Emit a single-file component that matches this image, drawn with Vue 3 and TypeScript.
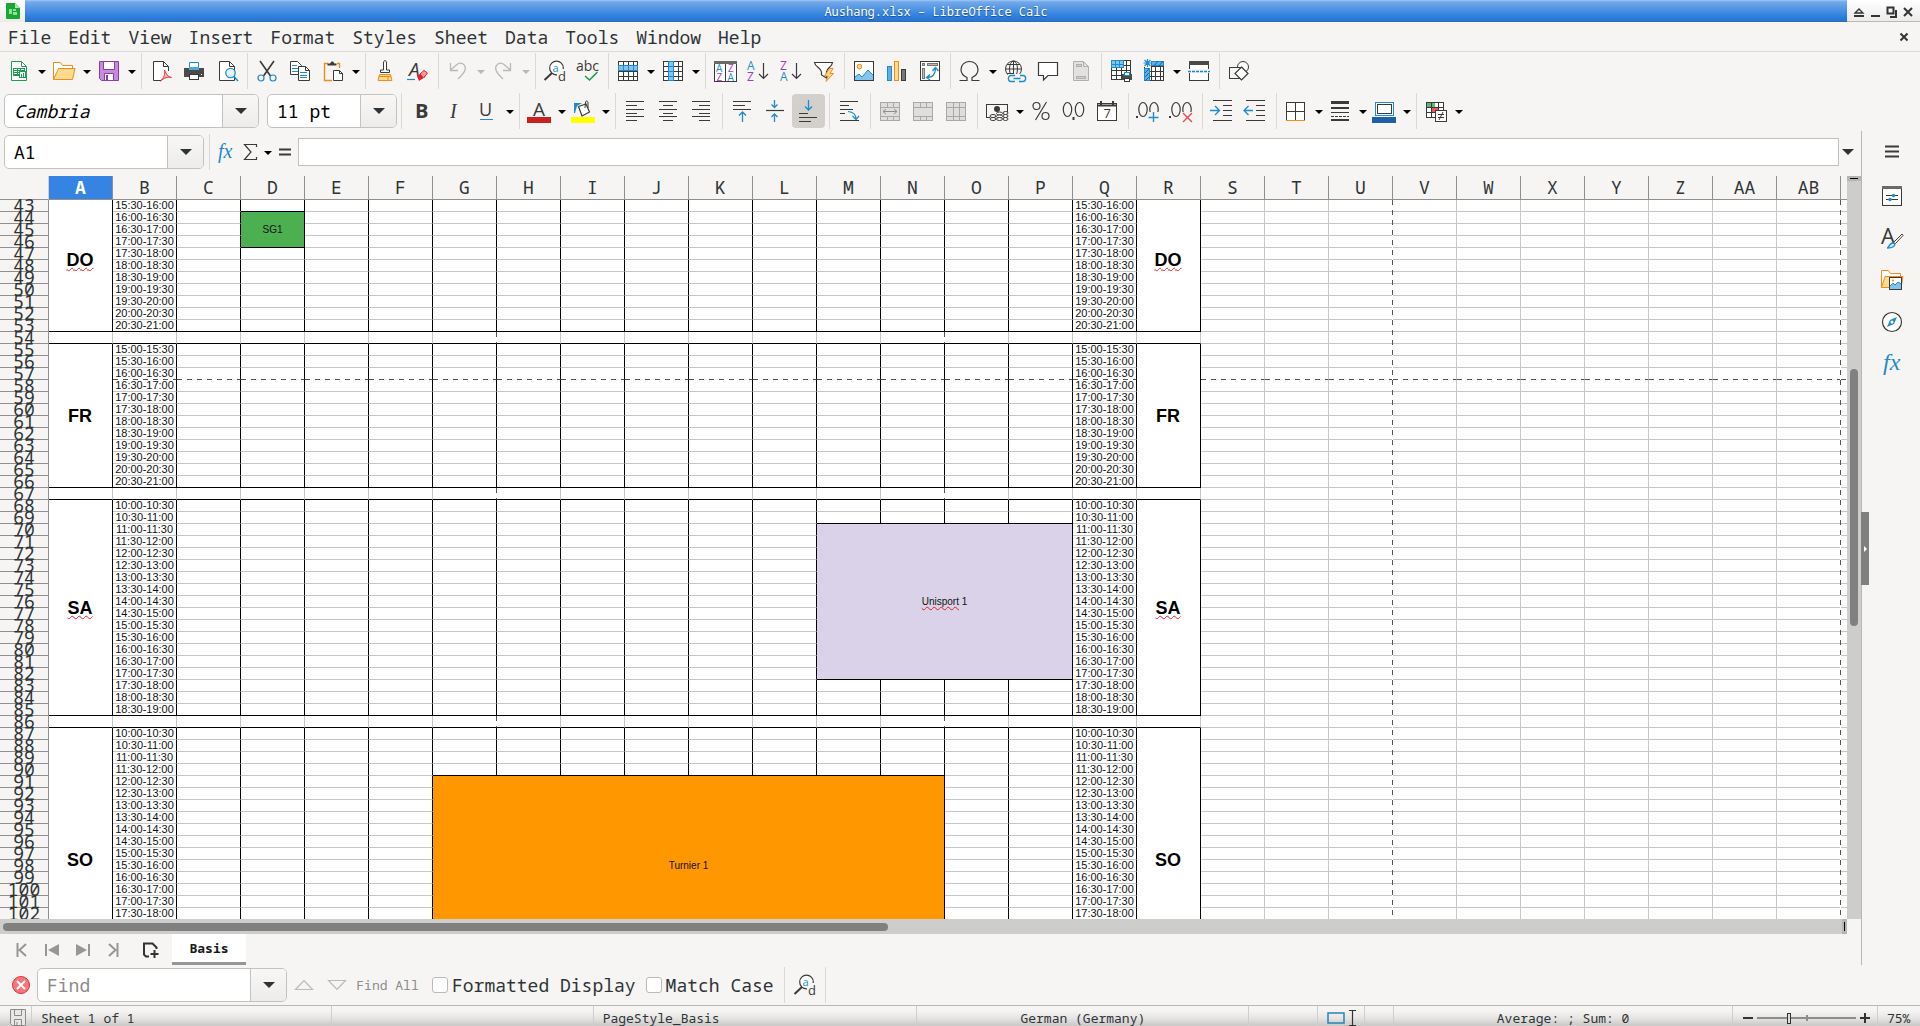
<script setup lang="ts">
interface Tool { kind: 'icon' | 'arrow' | 'sep'; icon?: string; label?: string; off?: boolean; on?: boolean }
interface Span { row: number; col: number; rows: number; cols: number; text: string; tail?: string; kind: string; wavy?: boolean }
interface Cell { key: string; rows: number; cols: number; text: string; tail: string; wavy: boolean; classes: string[] }

const K = '#3a3a38'
const B = '#1e8bcd'
const G = '#b9b8b6'
const line = (d: string, c = K, w = 1) => `<path d="${d}" fill="none" stroke="${c}" stroke-width="${w}"/>`
const box = (x: number, y: number, w: number, h: number, f = '#fff', s = K) =>
  `<rect x="${x + 0.5}" y="${y + 0.5}" width="${w - 1}" height="${h - 1}" fill="${f}" stroke="${s}"/>`
const fill = (d: string, c: string) => `<path d="${d}" fill="${c}"/>`
const word = (x: number, y: number, s: number, c: string, t: string, extra = '') =>
  `<text x="${x}" y="${y}" font-size="${s}" fill="${c}" font-family="Open Sans, sans-serif" ${extra}>${t}</text>`
const page = (c = K, f = '#fff') =>
  `<path d="M4.500 2.500H14.500L19.500 7.500V21.500H4.500z" fill="${f}" stroke="${c}"/><path d="M14.500 2.500V7.500H19.500" fill="none" stroke="${c}"/>`
const merge = (inner: string) =>
  box(2, 3, 20, 19, '#dededc', '#a9a8a6') + line('M2 8.500H22M2 17.500H22M9.500 3V8M15.500 3V8M9.500 18V22M15.500 18V22', '#a9a8a6') + inner
const finder =
  `<circle cx="13.500" cy="9" r="6.800" fill="#fff" stroke="${K}" stroke-width="1.200"/>` + line('M9 14L1.500 21', K, 2) +
  `<rect x="14" y="10" width="9" height="13" fill="#f6f5f4"/>` + word(9.5, 12.5, 11, B, 'a') + word(15, 22, 13, K, 'd')
const oval = (x: number) => `<ellipse cx="${x}" cy="10.500" rx="4.200" ry="7" fill="none" stroke="${K}" stroke-width="1.200"/>`

const icons: Record<string, string> = {
  new: page('#1f9d55') + box(6, 9, 12, 8, '#1f9d55', '#1f9d55') + fill('M7 10h3v1H7zM11 10h2v1h-2zM14 10h3v1h-3zM7 12h3v1H7zM11 12h2v1h-2zM7 14h3v1H7zM11 14h2v1h-2z', '#fff') + box(12, 12, 7, 7, '#fff', '#1f9d55') + fill('M14 15h1v3h-1zM16 14h1v4h-1z', '#1f9d55'),
  open: '<path d="M1.500 20.500V3.500H8.500L10.500 6.500H20.500V9" fill="#fff" stroke="#f08c1e"/><path d="M1.500 20.500L6.500 9.500H23L20.500 20.500z" fill="#ffd98c" stroke="#f08c1e"/>',
  save: '<path d="M2.500 2.500H21.500V21.500H4.500L2.500 19.500z" fill="#c78bdc" stroke="#8f3cab"/><path d="M6.500 2.500H17.500V10.500H6.500zM7.500 14.500H16.500V21.500H7.500z" fill="#fff" stroke="#8f3cab"/>' + fill('M9 16h2v5H9z', '#8f3cab'),
  pdf: page() + fill('M12 12h12v12H12z', '#f6f5f4') + '<path d="M15.500 11C17 15 19 18 22.500 18.500C19 17.500 15 19 11.500 22C14.500 20 16.500 15 15.500 11z" fill="#ffb8b8" stroke="#e03a3e"/>',
  print: '<path d="M7.500 9V3.500H16.500V9" fill="#fff" stroke="#1e8bcd"/>' + fill('M2 9H22V18H2z', '#4a4a48') + fill('M7 8h10v3H7z', '#4fa8e0') + box(7, 15, 10, 6, '#fff', K) + fill('M19 15h1v1h-1z', '#fff'),
  preview: page() + `<circle cx="15.500" cy="14" r="4.700" fill="#e8f4fc" stroke="${B}" stroke-width="1.300"/>` + line('M19 17.500L23 22', B, 1.5),
  cut: line('M5 2L15.500 17M19 2L8.500 17', K, 1.6) + `<circle cx="6" cy="19" r="3" fill="none" stroke="${B}" stroke-width="1.200"/><circle cx="18" cy="19" r="3" fill="none" stroke="${B}" stroke-width="1.200"/>`,
  copy: `<path d="M2.500 2.500H9.500L13.500 6.500V15.500H2.500z" fill="#fff" stroke="${K}"/>` + line('M4 6.500H9M4 9.500H11M4 12.500H11', B) + `<path d="M10.500 7.500H17.500L21.500 11.500V21.500H10.500z" fill="#fff" stroke="${K}"/>` + line('M17.500 7.500V11.500H21.500') + line('M12 13.500H19M12 16.500H19M12 18.500H19', B),
  paste: '<path d="M7 4.500H3.500V21.500H11M16 4.500H18.500V9" fill="none" stroke="#f08c1e" stroke-width="1.400"/>' + `<path d="M6.500 6.500V4.500H9L10.500 2.500H12L13.500 4.500H15.500V6.500z" fill="${K}"/><path d="M12.500 11.500H18.500L21.500 14.500V21.500H12.500z" fill="#fff" stroke="${K}"/>` + line('M18.500 11.500V14.500H21.500'),
  clone: `<path d="M10.500 11V4C10.500 .8 13.500 .8 13.500 4V11H16.500V13.500H7.500V11z" fill="#fff" stroke="${K}"/><path d="M6.500 15.500H17.500L19 21.500H5z" fill="#ffd98c" stroke="#f08c1e"/>` + line('M6 17.500H18M15 18V21', '#f08c1e'),
  clear: word(3, 17, 19, K, 'A', 'font-style="italic"') + line('M1 20.500H9', B, 1.2) + '<path d="M11 17L17 13L21 13L19 18L13 22z" fill="#e0202a"/><path d="M14 15L18 11.500L21.500 14L17.500 19z" fill="#ff9c9c" stroke="#e0202a"/>',
  undo: line('M4.500 4V11.500H12M4.500 11L11 5.500C15 2 20.500 6 19 11C18 14.500 15 17 12 20', G, 1.3),
  redo: line('M19.500 4V11.500H12M19.500 11L13 5.500C9 2 3.500 6 5 11C6 14.500 9 17 12 20', G, 1.3),
  find: finder,
  spell: word(0, 12, 14, K, 'abc') + line('M9 17L13.500 21L21.500 13', '#1f9d55', 1.6),
  rows: box(2, 2, 20, 20) + line('M7.500 2V22M12.500 2V22M17.500 2V22M2 12.500H22M2 17.500H22') + box(2, 6, 20, 6, '#83c3ee', B) + line('M7.500 7V11M12.500 7V11M17.500 7V11', B),
  cols: box(2, 2, 20, 20) + line('M7.500 2V22M12.500 2V22M17.500 2V22M2 7.500H22M2 12.500H22M2 17.500H22') + box(7, 2, 6, 20, '#83c3ee', B) + line('M7 7.500H13M7 12.500H13M7 17.500H13', B),
  sort: box(1, 2, 23, 21) + fill('M1 2H24V5H1z', '#6a6a68') + line('M12.500 5V23') + word(3, 13, 10, B, 'A') + word(3.5, 22, 10, '#a43bb8', 'Z') + word(15, 13, 10, '#a43bb8', 'Z') + word(14.5, 22, 10, B, 'A'),
  asc: word(1, 11, 12, B, 'A') + word(1, 22, 12, '#a43bb8', 'Z') + line('M17.500 4V19.500M13 15L17.500 19.500L22 15', K, 1.2),
  desc: word(1, 11, 12, '#a43bb8', 'Z') + word(1, 22, 12, B, 'A') + line('M17.500 4V19.500M13 15L17.500 19.500L22 15', K, 1.2),
  filter: `<path d="M2.500 3.500H20.500C20 8 15 8.500 14.500 13V19L9.500 16V13C9 8.500 3 8 2.500 3.500z" fill="#fff" stroke="${K}" stroke-width="1.200"/><path d="M17.500 9.500L12.500 17H16L14 22.500L21.500 14.500H18L21 9.500z" fill="#ffd98c" stroke="#f08c1e"/>`,
  image: box(2, 2, 20, 20) + '<circle cx="7.500" cy="7.500" r="2.300" fill="#ffd98c" stroke="#f08c1e"/>' + fill('M3 18L7 15L10 18L16 11L21 16V21H3z', '#83c3ee') + line('M3 18L7 15L10 18L16 11L21 16', B),
  chart: box(2, 7, 5, 15, '#5fb0e8', B) + box(9, 2, 5, 20, '#ffd98c', '#f08c1e') + box(16, 10, 5, 12, '#777', K),
  pivot: box(2, 2, 20, 20) + box(4, 4, 3, 3, '#bbb', '#777') + box(9, 4, 11, 3, '#bbb', '#777') + box(4, 9, 3, 11, '#bbb', '#777') + line('M9 18.500C15 18.500 17.500 15 17.500 9M14.500 12L17.500 8.500L20.500 12M12 15.500L8.500 18.500L12 21', B, 1.3),
  omega: line('M1.500 21.500H9V18.500C5.500 17 3 14 3 10.500C3 5.500 7 2.500 11.500 2.500C16 2.500 20 5.500 20 10.500C20 14 17.500 17 14 18.500V21.500H21.500', K, 1.2),
  link: `<g fill="none" stroke="${K}"><circle cx="10.500" cy="10" r="8"/><ellipse cx="10.500" cy="10" rx="4" ry="8"/><path d="M10.500 2V18M2.500 10H18.500M4 5.500H17M4 14.500H10"/></g>` + fill('M5 15h19v9H5z', '#f6f5f4') + `<g fill="none" stroke="${B}" stroke-width="1.300"><path d="M12 16.500H8C4.500 16.500 4.500 22.500 8 22.500H12M17 16.500H20C23.500 16.500 23.500 22.500 20 22.500H16M10.500 19.500H17.500"/></g>`,
  comment: `<path d="M2.500 3.500H21.500V16.500H12L7.500 21V16.500H2.500z" fill="#fff" stroke="${K}" stroke-width="1.200"/>`,
  header: page('#b0afad', '#e2e1df') + box(7, 5, 6, 3, '#cfcecc', '#b0afad') + box(7, 17, 10, 3, '#cfcecc', '#b0afad'),
  printarea: box(2, 1, 20, 20) + line('M7.500 1V21M12.500 1V21M17.500 1V21M2 6.500H22M2 11.500H22M2 16.500H22') + box(2, 1, 13, 8, '#83c3ee', B) + line('M6.500 1V9M10.500 1V9M2 5.500H15', B) + fill('M13 15h10v6H13z', '#4a4a48') + box(15, 13, 6, 4, '#fff', B) + box(15, 19, 6, 4, '#fff', K),
  freeze: box(2, 2, 20, 20) + line('M9.500 7V22M13.500 7V22M18.500 7V22M7 7.500H22M7 12.500H22M7 17.500H22') + box(9, 2, 13, 5, '#5fb0e8', B) + box(2, 9, 6, 13, '#5fb0e8', B) + line('M12 7L16 2M17 7L21 2M3 14L7 10M3 18L7 14M3 22L7 18', '#11659f') + fill('M1 0h8v8H1z', '#f6f5f4') + line('M5.500 0V8M1.500 4H9.500M2.500 1L8.500 7M8.500 1L2.500 7', B, 1.2),
  split: box(2, 2, 20, 20) + fill('M2 2H22V6H2z', '#4a4a48') + fill('M1 10H23V14H1z', '#f6f5f4') + `<path d="M1 12.500H23" stroke="${B}" stroke-dasharray="3 1" stroke-width="1.300"/>`,
  shapes: `<circle cx="16" cy="8" r="5.500" fill="#fff" stroke="${K}"/>` + box(2, 8, 12, 12, '#f6f5f4') + `<path d="M14.500 8L21 14.500L14.500 21L8 14.500z" fill="#fff" stroke="${K}" stroke-width="1.200"/>`,
  bold: word(6, 19, 20, K, 'B', 'font-weight="700"'),
  italic: word(8, 19, 20, K, 'I', 'font-style="italic" style="font-family:Liberation Serif"'),
  underline: word(4, 17, 18, K, 'U') + line('M5 20.500H18', B),
  fontcolor: word(6, 17, 19, K, 'A') + fill('M0 18H24V24H0z', '#c9211e'),
  fillcolor: `<path d="M7.500 7.500L15 5L18.500 13L11 17z" fill="#fff" stroke="${K}" stroke-width="1.200"/>` + line('M14 9L14.500 3C15 1.500 17 1.500 17 4V9') + fill('M3 4H11L6 7L4 14H3z', B) + fill('M0 18H24V24H0z', '#ffff00'),
  left: line('M3 2.500H21M3 6.500H14M3 10.500H21M3 14.500H14M3 17.500H21M3 21.500H14', K, 1.2),
  center: line('M3 2.500H21M7 6.500H17M3 10.500H21M7 14.500H17M3 17.500H21M7 21.500H17', K, 1.2),
  right: line('M3 2.500H21M10 6.500H21M3 10.500H21M10 14.500H21M3 17.500H21M10 21.500H21', K, 1.2),
  top: line('M3 2.500H21M3 6.500H15M3 10.500H21', K, 1.2) + line('M12.500 23V13M9 16.500L12.500 13L16 16.500', B, 1.3),
  middle: line('M3 11.500H21', K, 1.2) + line('M11.500 1V8.500M8.500 5.500L11.500 8.500L14.500 5.500M11.500 23V15M8.500 18L11.500 15L14.500 18', B, 1.3),
  bottom: line('M3 14.500H12M3 18.500H21M3 22.500H15', K, 1.2) + line('M12.500 1V11M9 7.500L12.500 11L16 7.500', B, 1.3),
  wrap: line('M3 2.500H21M3 6.500H12M3 10.500H16M3 14.500H8M3 21.500H22', K, 1.2) + line('M11 12.500C16 13 19 15 19 20M15.500 17L19 20.500L22 17', B, 1.2),
  mergecenter: merge(line('M5 12.500H19M8 10L5 12.500L8 15M16 10L19 12.500L16 15', '#8f8e8c')),
  mergecells: merge(''),
  unmerge: merge(line('M9.500 8V18M15.500 8V18', '#a9a8a6')),
  currency: box(1, 5, 22, 14, 'none') + `<circle cx="12" cy="10" r="3" fill="${K}"/>` + fill('M5 13h18v9H5z', '#f6f5f4') + `<g fill="#fff" stroke="${K}"><ellipse cx="8" cy="17" rx="3" ry="1.500"/><ellipse cx="8" cy="20" rx="3" ry="1.500"/><ellipse cx="14.500" cy="14.500" rx="3" ry="1.500"/><ellipse cx="14.500" cy="17.500" rx="3" ry="1.500"/><ellipse cx="14.500" cy="20" rx="3" ry="1.500"/><ellipse cx="20.500" cy="14" rx="2.500" ry="1.500"/><ellipse cx="20.500" cy="17" rx="2.500" ry="1.500"/><ellipse cx="20.500" cy="20" rx="2.500" ry="1.500"/></g>`,
  percent: `<g fill="none" stroke="${K}" stroke-width="1.200"><circle cx="7.500" cy="7" r="3.500"/><circle cx="16.500" cy="17" r="3.500"/><path d="M17.500 3L6.500 21"/></g>`,
  number: oval(5.5) + oval(17.5) + fill('M10.500 18h2v3h-2z', K),
  date: box(2, 4, 20, 18) + line('M2 6.500H22', K, 2) + fill('M5 2h2v5H5zM17 2h2v5h-2z', K) + word(8.5, 19, 13, K, '7'),
  adddec: fill('M0 17h2v2H0z', K) + oval(7) + oval(18) + fill('M13 13h11v11H13z', '#f6f5f4') + line('M17.500 13V23M12.500 18.500H22.500', B, 1.4),
  deldec: fill('M0 17h2v2H0z', K) + oval(7) + oval(18) + fill('M13 13h11v11H13z', '#f6f5f4') + line('M14 14L23 23M23 14L14 23', '#e8474b', 1.4),
  indent: line('M3 1.500H22M13 6.500H22M13 11.500H22M13 16.500H22M3 21.500H22', K, 1.2) + line('M0 11.500H9.500M5 7L9.500 11.500L5 16', B, 1.3),
  outdent: line('M3 1.500H22M13 6.500H22M13 11.500H22M13 16.500H22M3 21.500H22', K, 1.2) + line('M1 11.500H10M5.500 7L1 11.500L5.500 16', B, 1.3),
  border: box(2, 3, 19, 19) + line('M11.500 3V22M2 12.500H21') + line('M2 21.500H21', '#f08c1e'),
  linestyle: fill('M3 2H21V5H3zM3 8H21V10H3zM3 20H21V22H3z', K) + line('M3 13.500H21') + `<path d="M3 17.500H21" stroke="${K}" stroke-dasharray="3 1"/>`,
  bordercolor: box(3, 3, 19, 14, '#fff', B) + box(5, 5, 15, 10, '#fff', K) + fill('M0 18H24V24H0z', '#1f5fa6'),
  cond: box(2, 3, 18, 16) + fill('M3 4h8v4H3z', '#59b877') + fill('M7 8h8v5H7z', '#e8595c') + line('M2 8.500H20M2 13.500H20M7.500 3V19M14.500 3V19') + box(11, 11, 12, 12) + line('M14 15.500H20M14 18.500H20M19 13L15 21'),
  fx: word(4, 18, 20, B, 'fx', 'font-style="italic" style="font-family:Liberation Serif"'),
  sigma: line('M18.500 7V4.500H6.500L13 12L6.500 19.500H18.500V17', K, 1.2),
  equal: line('M6 9.500H18M6 14.500H18', K, 2),
  menu: line('M5 6.500H19M5 11.500H19M5 16.500H19', K, 2),
  props: box(2, 2, 20, 20) + fill('M2 2H22V5H2z', '#6a6a68') + line('M6 11.500H18M6 15.500H18') + `<circle cx="13.500" cy="11.500" r="1.700" fill="${B}"/><circle cx="10" cy="15.500" r="1.700" fill="${B}"/>`,
  styles: word(1, 18, 22, K, 'A') + `<path d="M22 8L15 15L13 16.500L15.500 17.500L23 9.500z" fill="#fff" stroke="${K}"/><path d="M7 22C9 22 9 17 13 17C16.500 18 15 22 7 22z" fill="#cfe9fa" stroke="${B}" stroke-width="1.300"/>`,
  gallery: '<path d="M1.500 19.500V2.500H8.500L10.500 5.500H20.500V8" fill="#fff" stroke="#f08c1e"/><path d="M1.500 19.500L5 8.500H23L21 19.500z" fill="#ffd98c" stroke="#f08c1e"/>' + box(9, 9, 13, 13) + fill('M10 18L13 15L15 17L18 14L21 16V21H10z', '#83c3ee') + line('M10 18L13 15L15 17L18 14L21 16', B) + '<circle cx="13" cy="12.500" r="1" fill="#f08c1e"/>',
  navigator: `<circle cx="12" cy="12" r="9.500" fill="#fff" stroke="${K}" stroke-width="1.200"/><path d="M17 7L14 14L7 17L10 10z" fill="${B}"/><circle cx="12" cy="12" r="1.500" fill="#fff"/>`,
  functions: word(3, 18, 24, B, 'fx', 'font-style="italic" style="font-family:Liberation Serif"'),
}

const tool = (spec: string): Tool[] => spec.split(' ').map((s) => {
  if (s === '|') return { kind: 'sep' }
  if (s === 'v' || s === 'v-') return { kind: 'arrow', off: s === 'v-', label: 'More options' }
  const name = s.replace(/[-+]$/, '')
  return { kind: 'icon', icon: name, label: name, off: s.endsWith('-'), on: s.endsWith('+') }
})
const standardBar = tool('new v open v save v | pdf print preview | cut copy paste v | clone clear | undo- v- redo- v- | find spell | rows v cols v | sort asc desc filter | image chart pivot | omega v link comment header- | printarea freeze v split | shapes')
const formatBar = tool('| bold italic underline v | fontcolor v fillcolor v | left center right | top middle bottom+ | wrap | mergecenter- mergecells- unmerge- | currency v percent number date | adddec deldec | indent outdent | border v linestyle v bordercolor v | cond v')
const sidebar = ['menu', 'props', 'styles', 'gallery', 'navigator', 'functions']
const menus = ['File', 'Edit', 'View', 'Insert', 'Format', 'Styles', 'Sheet', 'Data', 'Tools', 'Window', 'Help']

const columns = [...'ABCDEFGHIJKLMNOPQRSTUVWXYZ', 'AA', 'AB', '']
const firstRow = 43
const lastRow = 108
const timeCols = [2, 17]
const lastInkCol = 18
const days = [
  { name: 'DO', first: 43, last: 53, start: 930, wavy: true },
  { name: 'FR', first: 55, last: 66, start: 900, wavy: false },
  { name: 'SA', first: 68, last: 85, start: 600, wavy: true },
  { name: 'SO', first: 87, last: 108, start: 600, wavy: false },
]
const spans: Span[] = [
  ...days.flatMap((d) => [1, 18].map((col) => ({ row: d.first, col, rows: d.last - d.first + 1, cols: 1, text: d.name, kind: d.name === 'DO' ? 'day day-cut' : 'day', wavy: d.wavy }))),
  { row: 44, col: 4, rows: 3, cols: 1, text: 'SG1', kind: 'note green' },
  { row: 70, col: 13, rows: 13, cols: 4, text: 'Unisport', tail: ' 1', kind: 'note lilac', wavy: true },
  { row: 91, col: 7, rows: 15, cols: 8, text: 'Turnier 1', kind: 'note orange' },
]
const clock = (m: number) => `${Math.floor(m / 60)}:${String(m % 60).padStart(2, '0')}`

const rows = Array.from({ length: lastRow - firstRow + 1 }, (_, i) => {
  const row = firstRow + i
  const day = days.find((d) => row >= d.first && row <= d.last)
  const cells: Cell[] = []
  columns.forEach((_name, c) => {
    const col = c + 1
    const span = spans.find((s) => row >= s.row && row < s.row + s.rows && col >= s.col && col < s.col + s.cols)
    if (span && (span.row !== row || span.col !== col)) return
    const end = row + (span ? span.rows : 1)
    const classes: string[] = span ? span.kind.split(' ') : []
    if (col <= lastInkCol) {
      if (day) classes.push('ink-right')
      const edge = days.some((d) => d.first === end || d.last + 1 === end)
      const above = spans.some((s) => s.row === end && col >= s.col && col < s.col + s.cols)
      if (edge || above || span) classes.push('ink-bottom')
      if (!day && (col === 7 || col === 14)) classes.push('break-right')
    }
    if (row === 57 && !span) classes.push('break-bottom')
    let text = span ? span.text : ''
    if (day && timeCols.includes(col)) {
      const t = day.start + (row - day.first) * 30
      text = `${clock(t)}-${clock(t + 30)}`
      classes.push('time')
    }
    cells.push({ key: `${row}-${col}`, rows: span?.rows ?? 1, cols: span?.cols ?? 1, text, tail: span?.tail ?? '', wavy: !!span?.wavy, classes })
  })
  return { row, cells }
})
</script>

<template>
  <div class="app">
    <header class="title">
      <span class="title-icon"><svg width="14" height="16" viewBox="0 0 14 16"><path d="M1 0H9L14 5V15Q14 16 13 16H1Q0 16 0 15V1Q0 0 1 0z" fill="#18a832" /><path d="M9 0L14 5H9z" fill="#a6e8ae" /><path d="M3 6h3v5H3zM7 6h3v2H7zM7 9h4v3H7z" fill="#8fe09a" /></svg></span>
      <h1>Aushang.xlsx – LibreOffice Calc</h1>
      <span class="window-buttons">
        <button aria-label="Shade"><svg width="12" height="12" viewBox="0 0 12 12"><path d="M2 7L6 3L10 7z" fill="none" stroke="#333" stroke-width="1.300" /><path d="M1 9h10v2H1z" fill="#333" /></svg></button>
        <button aria-label="Minimise"><svg width="12" height="12" viewBox="0 0 12 12"><path d="M2 9h9v2H2z" fill="#333" /></svg></button>
        <button aria-label="Restore"><svg width="12" height="12" viewBox="0 0 12 12"><path d="M1.500 1.500h6v6h-6z" fill="none" stroke="#333" stroke-width="2" /><path d="M10 4v7H4" fill="none" stroke="#333" stroke-width="2" /></svg></button>
        <button aria-label="Close"><svg width="12" height="12" viewBox="0 0 12 12"><path d="M2 2L10 10M10 2L2 10" stroke="#333" stroke-width="2" /></svg></button>
      </span>
    </header>

    <nav class="menubar">
      <button v-for="m in menus" :key="m">{{ m }}</button>
      <button class="close-doc" aria-label="Close document"><svg width="12" height="12" viewBox="0 0 12 12"><path d="M2.500 2.500L9.500 9.500M9.500 2.500L2.500 9.500" stroke="#333" stroke-width="2" /></svg></button>
    </nav>

    <div class="toolbar standard">
      <template v-for="(t, i) in standardBar" :key="i">
        <span v-if="t.kind === 'sep'" class="sep"></span>
        <button v-else-if="t.kind === 'arrow'" class="drop" :class="{ off: t.off }" aria-label="More options"></button>
        <button v-else class="tool" :aria-label="t.label"><svg width="24" height="24" viewBox="0 0 24 24" v-html="icons[t.icon!]"></svg></button>
      </template>
    </div>

    <div class="toolbar formatting">
      <div class="combo font-name"><input aria-label="Font name" value="Cambria"><button aria-label="Show fonts"></button></div>
      <div class="combo font-size"><input aria-label="Font size" value="11 pt"><button aria-label="Show sizes"></button></div>
      <template v-for="(t, i) in formatBar" :key="i">
        <span v-if="t.kind === 'sep'" class="sep"></span>
        <button v-else-if="t.kind === 'arrow'" class="drop" aria-label="More options"></button>
        <button v-else class="tool" :class="{ on: t.on }" :aria-label="t.label"><svg width="24" height="24" viewBox="0 0 24 24" v-html="icons[t.icon!]"></svg></button>
      </template>
    </div>

    <div class="work">
      <main class="document">
        <div class="formula">
          <div class="combo cell-name"><input aria-label="Name box" value="A1"><button aria-label="Show names"></button></div>
          <span class="sep"></span>
          <button class="small" aria-label="Function wizard"><svg width="24" height="24" viewBox="0 0 24 24" v-html="icons.fx"></svg></button>
          <button class="small" aria-label="Select function"><svg width="24" height="24" viewBox="0 0 24 24" v-html="icons.sigma"></svg></button>
          <button class="drop" aria-label="More functions"></button>
          <button class="small" aria-label="Formula"><svg width="24" height="24" viewBox="0 0 24 24" v-html="icons.equal"></svg></button>
          <input class="formula-input" aria-label="Input line">
          <button class="expand" aria-label="Expand formula bar"></button>
        </div>

        <div class="sheet">
          <div class="grid">
            <table>
              <colgroup><col class="col-head"><col v-for="(c, i) in columns" :key="i"></colgroup>
              <thead>
                <tr><th></th><th v-for="(c, i) in columns" :key="i" scope="col" :class="{ current: i === 0 }">{{ c }}</th></tr>
              </thead>
              <tbody>
                <tr v-for="r in rows" :key="r.row">
                  <th scope="row">{{ r.row }}</th>
                  <td v-for="c in r.cells" :key="c.key" :rowspan="c.rows" :colspan="c.cols" :class="c.classes"><span :class="{ wavy: c.wavy }">{{ c.text }}</span>{{ c.tail }}</td>
                </tr>
              </tbody>
            </table>
            <i class="page-break after-u"></i>
            <i class="page-break after-ab"></i>
          </div>
          <div class="v-scroll"><i class="splitter"></i><i class="thumb"></i></div>
        </div>

        <div class="h-scroll"><i class="thumb"></i><i class="splitter"></i></div>

        <div class="tabs">
          <button aria-label="First sheet"><svg width="20" height="20" viewBox="0 0 20 20"><path d="M6.500 3V17M15 4L8.500 10L15 16" fill="none" stroke="#949796" stroke-width="2" /></svg></button>
          <button aria-label="Previous sheet"><svg width="20" height="20" viewBox="0 0 20 20"><path d="M4 4V16" stroke="#949796" stroke-width="2" /><path d="M17 4V16L6 10z" fill="#949796" /></svg></button>
          <button aria-label="Next sheet"><svg width="20" height="20" viewBox="0 0 20 20"><path d="M16 4V16" stroke="#949796" stroke-width="2" /><path d="M3 4V16L14 10z" fill="#949796" /></svg></button>
          <button aria-label="Last sheet"><svg width="20" height="20" viewBox="0 0 20 20"><path d="M13.500 3V17M5 4L11.500 10L5 16" fill="none" stroke="#949796" stroke-width="2" /></svg></button>
          <button class="add" aria-label="Add sheet"><svg width="20" height="20" viewBox="0 0 20 20"><path d="M8 16.500H5L3 14.500V3.500H11.500L15.500 7.500V9M13.500 10V18M9.500 14H17.500" fill="none" stroke="#333" stroke-width="2" /></svg></button>
          <button class="tab">Basis</button>
        </div>
      </main>

      <aside class="sidebar">
        <button v-for="s in sidebar" :key="s" :aria-label="s"><svg width="24" height="24" viewBox="0 0 24 24" v-html="icons[s]"></svg></button>
        <button class="collapse" aria-label="Hide sidebar"></button>
      </aside>
    </div>

    <div class="findbar">
      <button class="close-find" aria-label="Close find bar"><svg width="18" height="18" viewBox="0 0 18 18"><circle cx="9" cy="9" r="8.500" fill="#f5767a" stroke="#d93438" /><path d="M5 5L13 13M13 5L5 13" stroke="#fff" stroke-width="2" /></svg></button>
      <div class="combo find-text"><input aria-label="Find" placeholder="Find"><button aria-label="Show recent searches"></button></div>
      <button class="step" aria-label="Find previous"><svg width="20" height="12" viewBox="0 0 20 12"><path d="M1.500 10.500H18.500L10 1.500z" fill="none" stroke="#bbbab8" stroke-width="1.200" /></svg></button>
      <button class="step" aria-label="Find next"><svg width="20" height="12" viewBox="0 0 20 12"><path d="M1.500 1.500H18.500L10 10.500z" fill="none" stroke="#bbbab8" stroke-width="1.200" /></svg></button>
      <button class="find-all">Find All</button>
      <label><input type="checkbox">Formatted Display</label>
      <label><input type="checkbox">Match Case</label>
      <span class="sep"></span>
      <button class="tool" aria-label="Find and replace"><svg width="24" height="24" viewBox="0 0 24 24" v-html="icons.find"></svg></button>
      <span class="sep"></span>
    </div>

    <footer class="status">
      <span class="s-icon"><svg width="16" height="17" viewBox="0 0 16 17"><path d="M.500 .500H15.500V16.500H2.500L.500 14.500z" fill="#e8e7e5" stroke="#8b8a88" /><path d="M4.500 .500V6.500H11.500V.500M4.500 16V10.500H11.500V16M7 13V16" fill="none" stroke="#8b8a88" /></svg></span>
      <span class="s-sheet">Sheet 1 of 1</span>
      <span class="s-blank"></span>
      <span class="s-style">PageStyle_Basis</span>
      <span class="s-lang">German (Germany)</span>
      <span class="s-insert"></span>
      <span class="s-select"><svg width="30" height="18" viewBox="0 0 30 18"><path d="M1 4H17V14H1z" fill="none" stroke="#2a83b5" stroke-width="1.500" /><path d="M22 1.500H29M25.500 1.500V16.500M22 16.500H29" fill="none" stroke="#333" stroke-width="1.200" /></svg></span>
      <span class="s-sign"></span>
      <span class="s-sum">Average: ; Sum: 0</span>
      <span class="s-zoom">
        <button aria-label="Zoom out"><svg width="12" height="12" viewBox="0 0 12 12"><path d="M1 6H11" stroke="#333" stroke-width="2" /></svg></button>
        <input type="range" min="20" max="140" value="58" aria-label="Zoom">
        <button aria-label="Zoom in"><svg width="12" height="12" viewBox="0 0 12 12"><path d="M1 6H11M6 1V11" stroke="#333" stroke-width="2" /></svg></button>
      </span>
      <span class="s-percent">75%</span>
    </footer>
  </div>
</template>

<style>
body { margin: 0; overflow: hidden; }
</style>

<style scoped>
.app {
  --line: #c3c2c0;
  --mono: "Noto Sans Mono", "DejaVu Sans Mono", monospace;
  display: flex;
  flex-direction: column;
  height: 100vh;
  background: #f6f5f4;
  color: #2e3436;
  font: 18px/24px var(--mono);
}
button, input { font: inherit; color: inherit; margin: 0; padding: 0; border: 0; background: none; box-sizing: border-box; }
button { display: flex; align-items: center; justify-content: center; flex: none; white-space: nowrap; }
svg { display: block; flex: none; overflow: visible; }

.title { display: flex; height: 22px; flex: none; background: linear-gradient(#9cc8f6 0, #72a8e8 2px, #2f80df 16px, #2b74cd 21px, #2667b8 22px); }
.title-icon { width: 25px; display: flex; align-items: center; justify-content: center; background: linear-gradient(#fff, #ecebea); }
.title h1 { flex: 1; margin: 0; text-align: center; font-size: 12px; font-weight: 400; line-height: 24px; color: #fff; text-shadow: 0 1px 1px #1d4f90; }
.window-buttons { width: 73px; box-sizing: border-box; padding: 2px 4px 0; display: flex; justify-content: space-around; background: linear-gradient(#fff, #ecebea); border-bottom: 1px solid #b9b8b6; }
.window-buttons button { width: 14px; }

.menubar { display: flex; gap: 17px; height: 29px; flex: none; padding: 0 10px 0 8px; }
.close-doc { margin-left: auto; }

.toolbar { display: flex; align-items: center; height: 40px; flex: none; box-sizing: border-box; --drop: 11px; --sep: 8px; }
.standard { border-top: 1px solid #dbdad8; padding: 0 0 1px 3px; --drop: 12px; --sep: 7px; }
.formatting { padding-left: 4px; }
.tool { width: 33px; height: 34px; padding-right: 1px; border-radius: 4px; }
.tool.on { background: #d3cfcb; }
.drop { width: var(--drop, 11px); height: 34px; padding-top: 2px; }
.drop::before { content: ""; border: 4px solid transparent; border-top-color: #000; border-bottom: 0; }
.drop.off::before { border-top-color: #b9b8b6; }
.sep { width: var(--sep, 8px); height: 36px; flex: none; background: linear-gradient(90deg, #dad9d7, #dad9d7) center / 1px 100% no-repeat; }

.combo { display: flex; height: 34px; flex: none; box-sizing: border-box; border: 1px solid var(--line); border-radius: 5px; background: #fff; overflow: hidden; color: #000; }
.combo input { flex: 1; min-width: 0; padding: 0 9px; }
.combo button { width: 36px; border-left: 1px solid var(--line); background: linear-gradient(#f8f7f6, #edecea); }
.combo button::before, .expand::before { content: ""; border: 6px solid transparent; border-top-color: #2e3436; border-bottom: 0; }
.font-name { width: 255px; margin-right: 8px; font-style: italic; }
.font-size { width: 130px; }
.cell-name { width: 200px; }

.work { display: flex; flex: 1; min-height: 0; }
.document { flex: 1; min-width: 0; display: flex; flex-direction: column; }
.formula { display: flex; align-items: center; height: 45px; flex: none; box-sizing: border-box; padding: 0 0 3px 4px; --sep: 10px; }
.small { width: 24px; height: 34px; }
.formula-input { flex: 1; min-width: 0; height: 28px; margin-left: 1px; padding: 0 8px; border: 1px solid var(--line); background: #fff; }
.expand { width: 22px; height: 28px; padding-right: 4px; }

.sheet { display: flex; flex: 1; min-height: 0; }
.grid { flex: 1; min-width: 0; position: relative; overflow: hidden; background: #fff; }
table { table-layout: fixed; width: 1905px; border-collapse: separate; border-spacing: 0; }
col { width: 64px; }
col.col-head { width: 49px; }
th, td { box-sizing: border-box; padding: 0; border: 0 solid #c6c6c4; border-width: 0 1px 1px 0; white-space: nowrap; text-align: center; vertical-align: middle; }
th { background: #f6f5f4; border-color: #8f8f8d; font-weight: 400; }
thead th { height: 24px; line-height: 23px; }
thead th:first-child { border-right-color: #d0cfcd; }
thead th.current { background: #3584e4; color: #fff; font-weight: 700; }
tbody tr { height: 12px; }
tbody th { height: 12px; line-height: 11px; }
tbody td { height: 12px; line-height: 11px; font-family: "Liberation Sans", Arial, sans-serif; font-size: 11px; color: #111; }
td.ink-right { border-right-color: #000; }
td.ink-bottom { border-bottom-color: #000; }
td.day { padding-right: 1px; font-size: 18px; font-weight: 700; line-height: 20px; color: #000; }
td.day-cut { padding-bottom: 12px; }
td.note { font-size: 10px; color: #111; }
td.green { background: #4caf50; }
td.lilac { background: #dad2e9; }
td.orange { background: #ff9800; }
td.break-bottom { border-bottom-color: transparent; background: repeating-linear-gradient(90deg, #555 0 5px, #fff 5px 10px) left bottom / 100% 1px no-repeat border-box; }
td.break-right { border-right-color: transparent; background: repeating-linear-gradient(#555 0 5px, #fff 5px 10px) right top / 1px 100% no-repeat border-box; }
.wavy { text-decoration: underline wavy #e0202a 1px; text-underline-offset: 1px; text-decoration-skip-ink: none; }
.page-break { position: absolute; top: 24px; bottom: 0; width: 1px; background: repeating-linear-gradient(#555 0 5px, #fff 5px 10px); }
.after-u { left: 1392px; }
.after-ab { left: 1840px; }

.v-scroll { width: 14px; flex: none; display: flex; flex-direction: column; align-items: center; background: #cdcdcb; }
.v-scroll .splitter { width: 14px; height: 5px; background: linear-gradient(#000, #000) center / 8px 1px no-repeat #b5b5b3; }
.v-scroll .thumb { width: 8px; height: 257px; margin-top: 188px; border-radius: 4px; background: #808080; }
.h-scroll { height: 15px; flex: none; display: flex; align-items: center; justify-content: space-between; margin-right: 14px; padding-left: 3px; background: #cdcdcb; }
.h-scroll .thumb { width: 48%; height: 8px; border-radius: 4px; background: #808080; }
.h-scroll .splitter { width: 5px; height: 15px; background: linear-gradient(#000, #000) center / 1px 9px no-repeat #b5b5b3; }

.tabs { display: flex; align-items: stretch; height: 31px; flex: none; padding-left: 5px; }
.tabs button { width: 31px; }
.tabs .add { width: 43px; }
.tabs .tab { width: 74px; background: #fff; border-bottom: 3px solid #949796; font-size: 13px; font-weight: 700; color: #1a1a1a; }

.sidebar { position: relative; width: 59px; flex: none; box-sizing: border-box; border-left: 1px solid #b9b8b6; display: flex; flex-direction: column; align-items: center; }
.sidebar button { width: 42px; height: 42px; margin-left: 2px; }
.sidebar button:first-child { margin-bottom: 2px; }
.sidebar .collapse { position: absolute; left: -1px; top: 381px; width: 8px; height: 73px; margin: 0; background: #808080; }
.collapse::before { content: ""; border: 3px solid transparent; border-left-color: #fff; border-right: 0; }

.findbar { display: flex; align-items: center; height: 40px; flex: none; padding-left: 12px; }
.close-find { margin-right: 7px; }
.find-text { width: 250px; }
.find-text input::placeholder { color: #8b8c8b; opacity: 1; }
.step { width: 33px; }
.find-all { width: 69px; font-size: 13px; color: #8b8c8b; }
.findbar label { display: flex; align-items: center; gap: 4px; margin-left: 10px; }
.findbar input[type="checkbox"] { appearance: none; width: 16px; height: 16px; border: 1px solid #bbbab8; border-radius: 3px; background: #fff; }
.findbar label + .sep { margin-left: 7px; }

.status { display: flex; height: 21px; flex: none; box-sizing: border-box; border-top: 1px solid #b9b8b6; background: linear-gradient(#f6f5f4 4px, #e6e5e3 12px, #c9c8c6 20px); font-size: 13px; line-height: 24px; overflow: hidden; }
.status > span { box-sizing: border-box; flex-shrink: 0; border-right: 1px solid #cfcecc; padding: 0 9px; white-space: nowrap; }
.s-icon { width: 32px; }
.status .s-icon { padding: 3px 0 0 10px; }
.status .s-sheet { flex: 300 1 300px; }
.status .s-blank { flex: 262 1 262px; }
.status .s-style { flex: 324 1 324px; }
.status .s-lang { flex: 332 1 332px; text-align: center; }
.status .s-insert { flex: 69 1 69px; }
.s-select { width: 47px; }
.status .s-select { padding-top: 3px; }
.s-sign { width: 29px; }
.status .s-sum { flex: 339 1 339px; text-align: center; }
.s-zoom { width: 145px; display: flex; align-items: center; gap: 3px; }
.status .s-zoom { padding: 4px 6px 0 9px; }
.s-zoom input { appearance: none; flex: 1; min-width: 0; height: 14px; background: linear-gradient(#8b8c8b, #8b8c8b) center / 100% 2px no-repeat, linear-gradient(#8b8c8b, #8b8c8b) center / 2px 6px no-repeat; }
.s-zoom input::-webkit-slider-thumb { appearance: none; width: 4px; height: 11px; border: 1px solid #2e3436; background: #ddd; box-sizing: border-box; }
.status .s-percent { width: 42px; border-right: 0; }
</style>
